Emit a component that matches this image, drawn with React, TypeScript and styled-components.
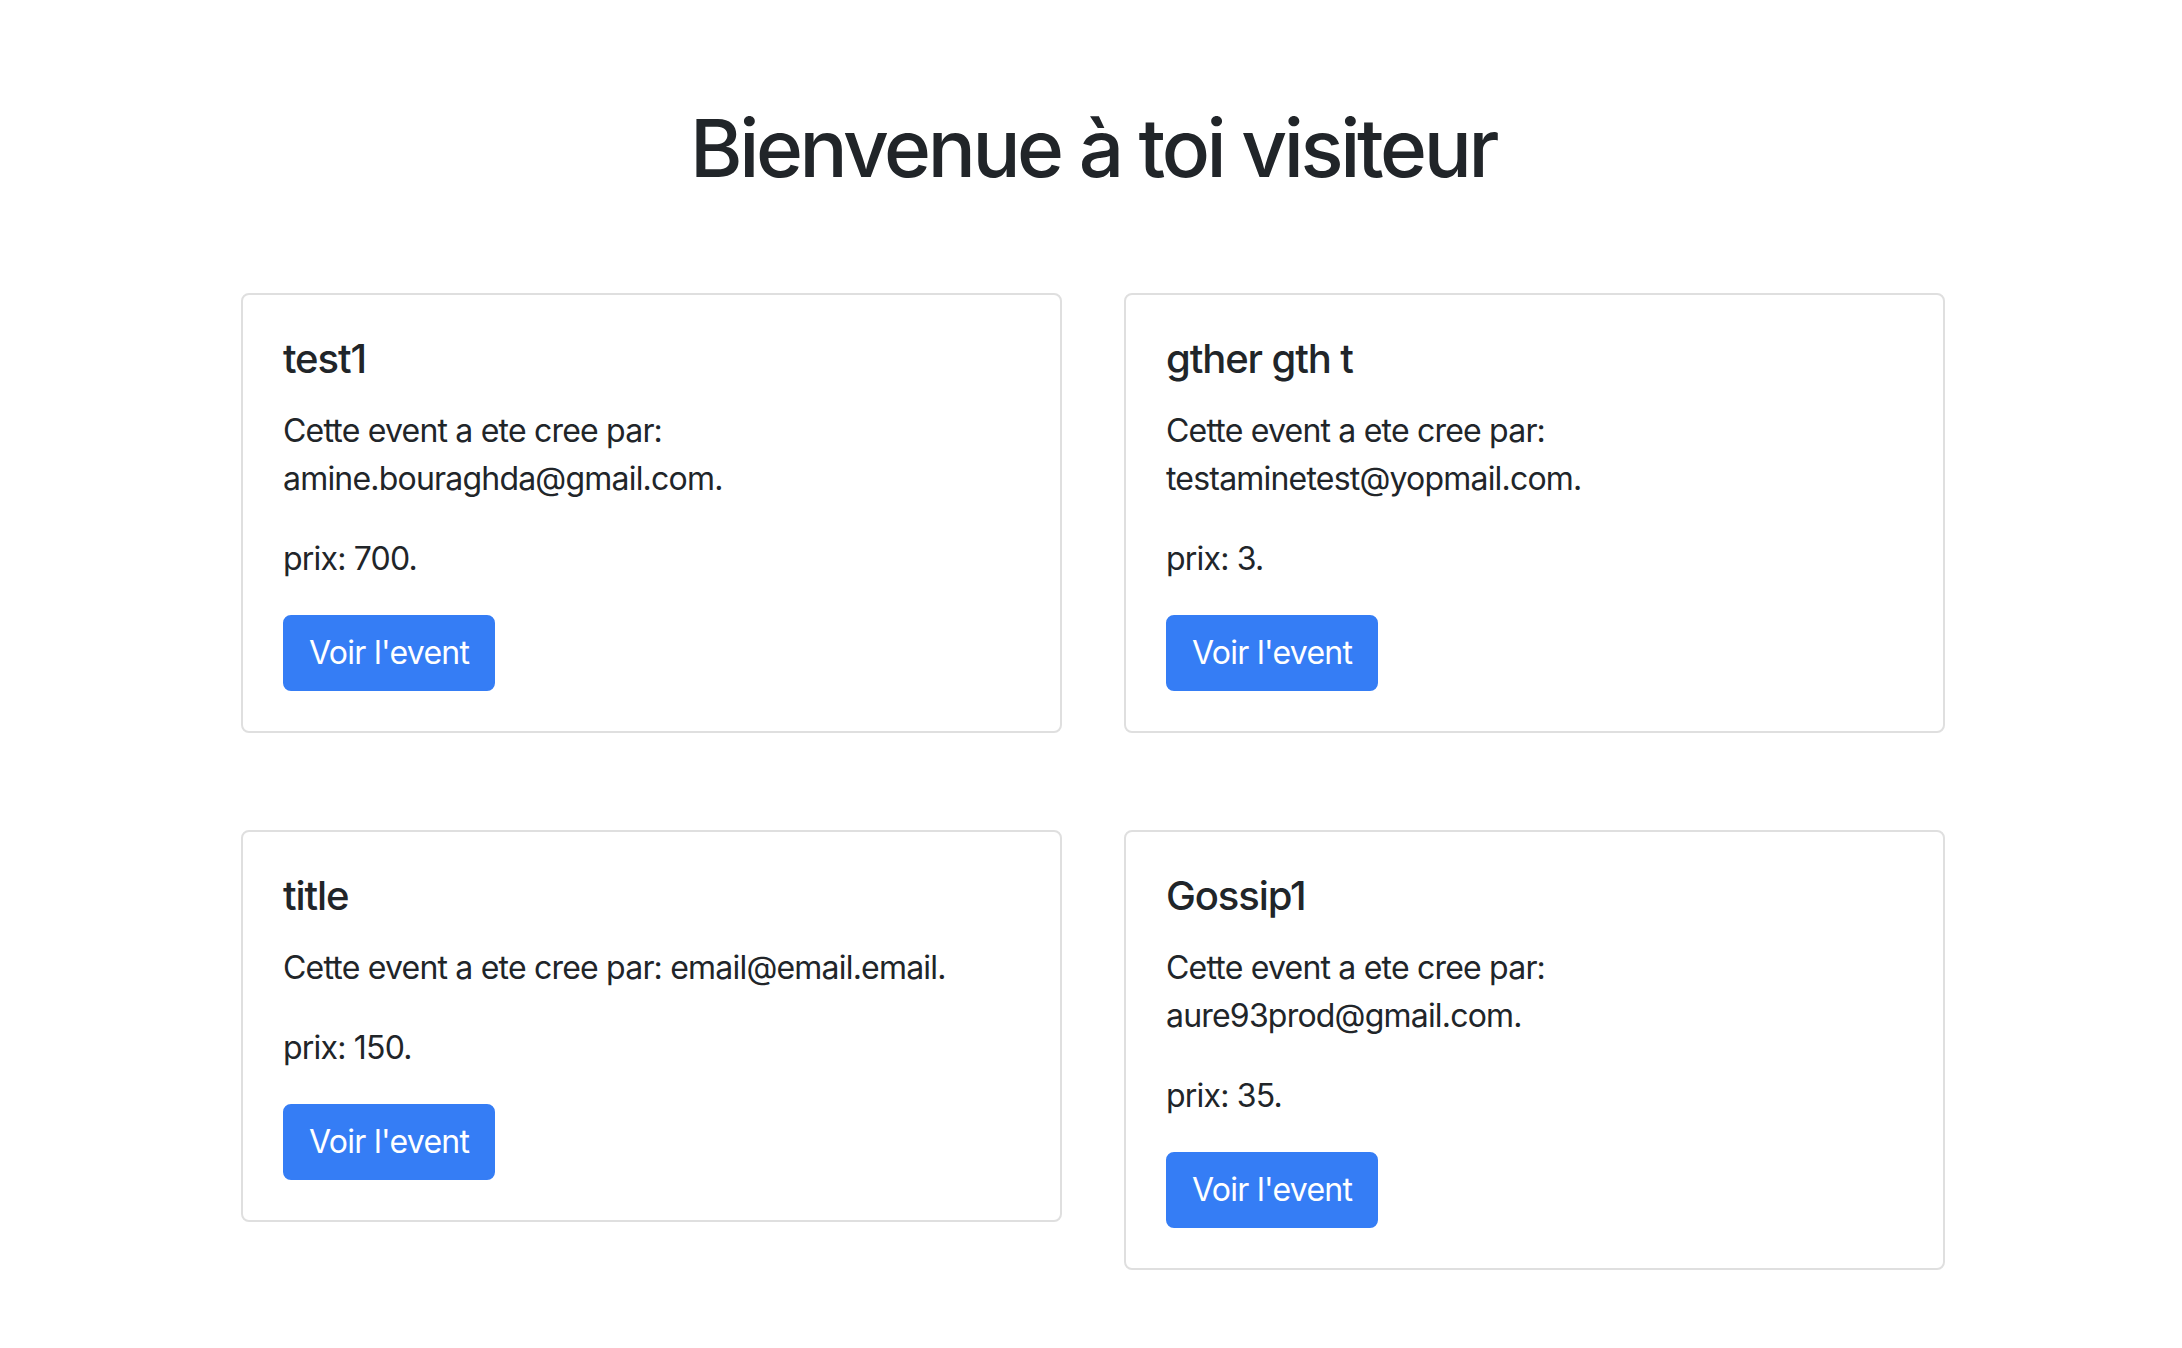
import React from "react";
import styled, { createGlobalStyle } from "styled-components";

const GlobalStyle = createGlobalStyle`
  html, body {
    margin: 0;
    padding: 0;
    background: #ffffff;
  }
  body {
    font-family: Inter, "Noto Sans", "Liberation Sans", sans-serif;
    color: #212529;
    -webkit-font-smoothing: antialiased;
  }
  * { box-sizing: border-box; }
`;

const Page = styled.main`
  width: 100%;
  min-height: 1348px;
  padding-top: 100px;
  padding-left: 4px;
  display: flex;
  flex-direction: column;
  align-items: center;
`;

const Heading = styled.h1`
  margin: 0;
  font-size: 80px;
  font-weight: 500;
  line-height: 96px;
  letter-spacing: -3.4px;
  text-align: center;
  color: #212529;
`;

const Grid = styled.section`
  margin-top: 97px;
  display: grid;
  grid-template-columns: 821px 821px;
  column-gap: 62px;
  row-gap: 97px;
  align-items: start;
`;

const Card = styled.article`
  border: 2px solid #dfdfdf;
  border-radius: 8px;
  background: #ffffff;
  padding: 40px;
`;

const CardTitle = styled.h5`
  margin: 0 0 24px;
  font-size: 40px;
  font-weight: 500;
  line-height: 48px;
  letter-spacing: -1.1px;
`;

const CardText = styled.p`
  margin: 0 0 32px;
  font-size: 32px;
  font-weight: 400;
  line-height: 48px;
  letter-spacing: -0.8px;
`;

const Button = styled.a`
  display: inline-block;
  height: 76px;
  padding: 12px 24px;
  border: 2px solid rgb(53, 125, 245);
  border-radius: 8px;
  background: rgb(53, 125, 245);
  color: #ffffff;
  font-size: 32px;
  line-height: 48px;
  letter-spacing: -0.7px;
  text-decoration: none;
  cursor: pointer;
`;

type EventItem = { title: string; author: string; price: string };

const events: EventItem[] = [
  { title: "test1", author: "amine.bouraghda@gmail.com", price: "700" },
  { title: "gther gth t", author: "testaminetest@yopmail.com", price: "3" },
  { title: "title", author: "email@email.email", price: "150" },
  { title: "Gossip1", author: "aure93prod@gmail.com", price: "35" },
];

export default function App() {
  return (
    <>
      <GlobalStyle />
      <Page>
        <Heading>Bienvenue à toi visiteur</Heading>
        <Grid>
          {events.map((e) => (
            <Card key={e.title}>
              <CardTitle>{e.title}</CardTitle>
              <CardText>Cette event a ete cree par: {e.author}.</CardText>
              <CardText>prix: {e.price}.</CardText>
              <Button>Voir l'event</Button>
            </Card>
          ))}
        </Grid>
      </Page>
    </>
  );
}
